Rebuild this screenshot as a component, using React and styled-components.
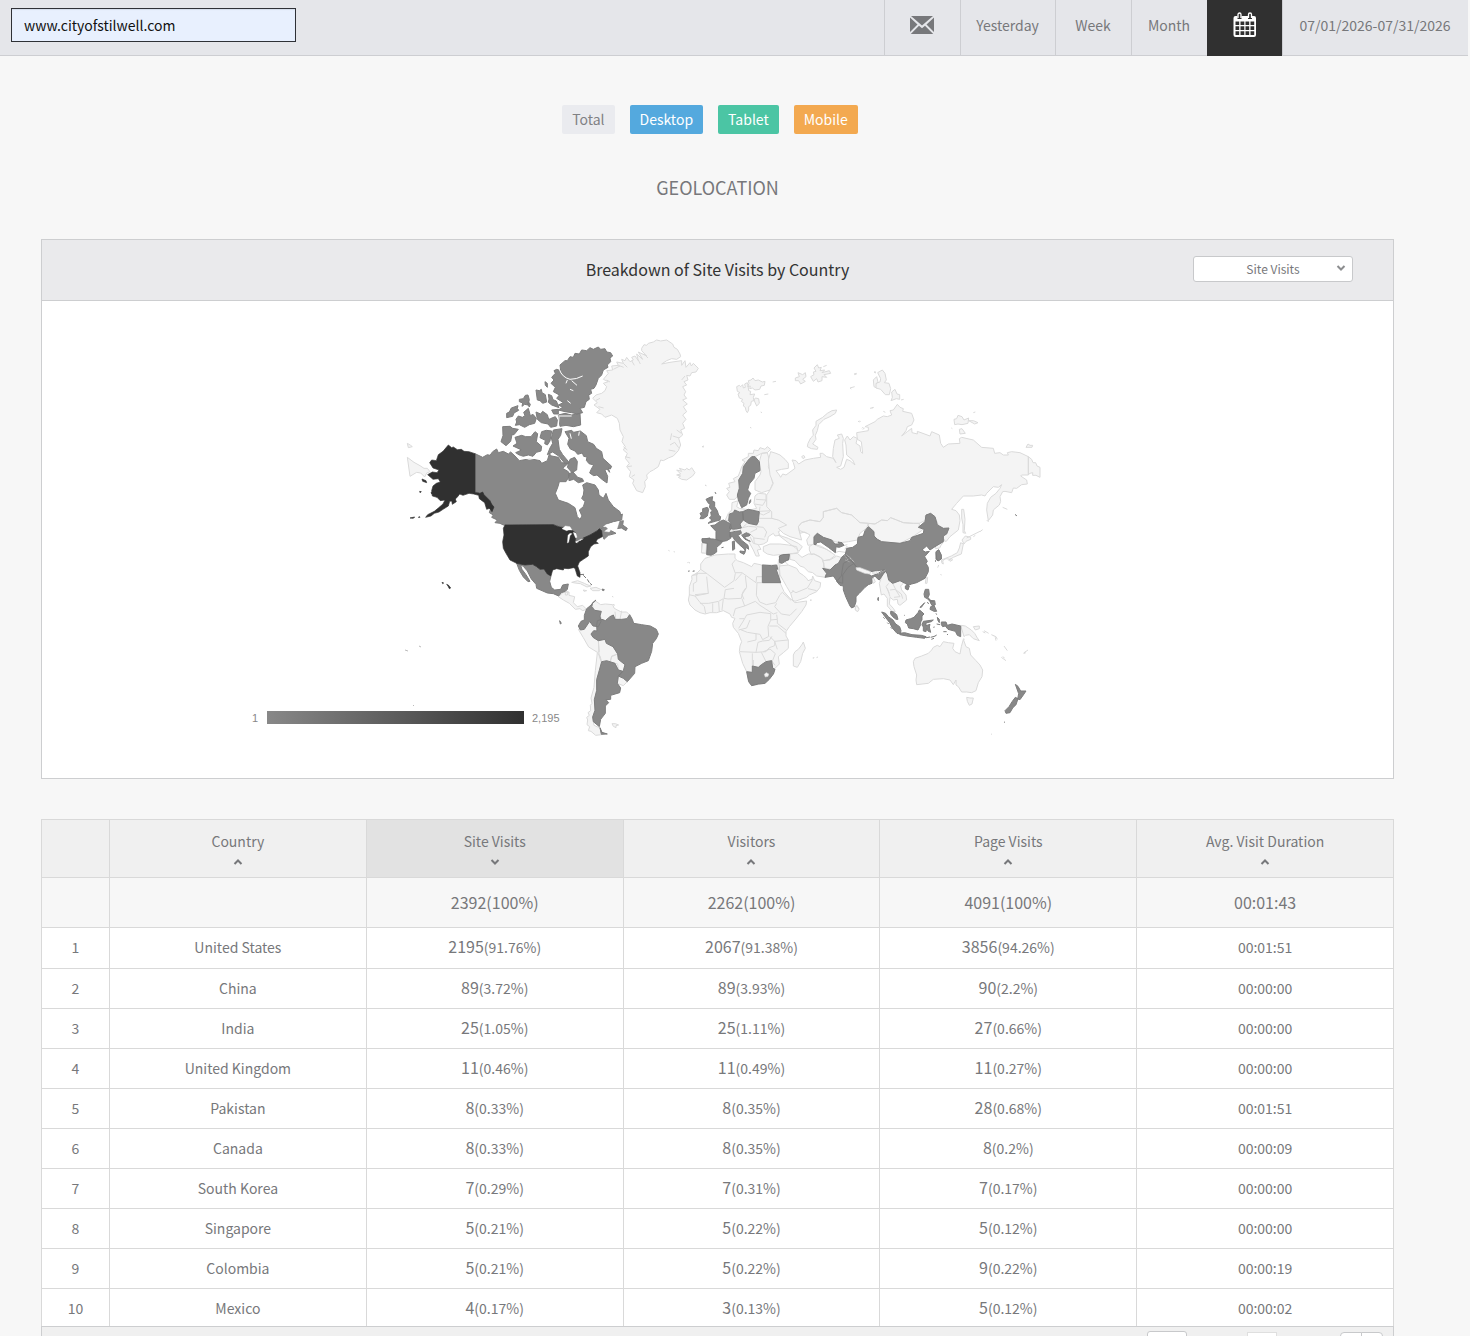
import React, { useState } from 'react';
import styled, { createGlobalStyle, css } from 'styled-components';

const GlobalStyle = createGlobalStyle`
  * {
    box-sizing: border-box;
  }

  body {
    margin: 0;
    background: #f7f7f7;
    color: #77787b;
    font-family: 'Noto Sans CJK SC', 'Open Sans', sans-serif;
    font-size: 14px;
  }

  button,
  input,
  select {
    font-family: inherit;
    font-size: inherit;
    color: inherit;
  }
`;

const Page = styled.div`
  height: 100vh;
  overflow: hidden;
`;

const TopBar = styled.header`
  display: flex;
  align-items: stretch;
  justify-content: space-between;
  height: 56px;
  margin-right: 2px;
  background: #e5e6ea;
  border-bottom: 1px solid #cdced2;
`;

const SiteInput = styled.input`
  width: 285px;
  height: 34px;
  margin: 8px 0 0 11px;
  padding: 0 12px;
  border: 1px solid #2f3136;
  border-radius: 0;
  background: #e8f0fe;
  box-shadow: inset 0 1px 1px rgba(0, 0, 0, 0.08);
  color: #111111;
  outline: none;
`;

const Periods = styled.nav`
  display: flex;
  height: 56px;
`;

const PeriodButton = styled.button`
  display: flex;
  align-items: center;
  justify-content: center;
  width: ${({ $width }) => $width || 76}px;
  padding: 0 1px 6px 0;
  border: 0;
  border-left: 1px solid #cdced2;
  border-bottom: 1px solid #cdced2;
  background: transparent;
  cursor: pointer;

  ${({ $active }) =>
    $active &&
    css`
      border-color: #303030;
      background: #303030;
      color: #ffffff;
    `}
`;

const Content = styled.main`
  padding: 49px 76px 0 41px;
`;

const Devices = styled.div`
  display: flex;
  justify-content: center;

  button {
    margin-right: 15px;
  }
`;

const DeviceButton = styled.button`
  height: 29px;
  padding: 0 10px;
  border: 0;
  border-radius: 2px;
  background: ${({ $background }) => $background};
  color: ${({ $color }) => $color || '#ffffff'};
  line-height: 29px;
  cursor: pointer;
`;

const Title = styled.h1`
  margin: 39px 0 37px;
  font-size: 18px;
  font-weight: 400;
  line-height: 29px;
  text-align: center;
`;

const Panel = styled.section`
  border: 1px solid #cdced0;
  background: #ffffff;
`;

const PanelHeader = styled.div`
  display: grid;
  grid-template-columns: 200px 1fr 200px;
  align-items: center;
  height: 61px;
  border-bottom: 1px solid #cdced0;
  background: #eaeaec;
`;

const PanelTitle = styled.h2`
  grid-column: 2;
  margin: 0;
  padding-bottom: 2px;
  color: #333333;
  font-size: 16px;
  font-weight: 400;
  text-align: center;
`;

const MetricPicker = styled.div`
  position: relative;
  width: 160px;
  height: 28px;

  svg {
    position: absolute;
    top: 8px;
    right: 7px;
    pointer-events: none;
  }
`;

const MetricSelect = styled.select`
  display: block;
  width: 160px;
  height: 26px;
  padding: 0 8px 2px;
  border: 1px solid #c8c9cb;
  border-radius: 3px;
  background: #ffffff;
  appearance: none;
  font-size: 12px;
  text-align-last: center;
`;

const MapSvg = styled.svg`
  display: block;
  width: 100%;
  height: 477px;
`;

const Scroller = styled.div`
  max-height: 507px;
  margin-top: 40px;
  overflow: hidden;
`;

const Table = styled.table`
  width: 100%;
  border-collapse: collapse;
  table-layout: fixed;
  background: #ffffff;
  text-align: center;

  th,
  td {
    padding: 0 0 2px;
    border: 1px solid #d9d9d9;
    font-weight: 400;
    line-height: 20px;
  }
`;

const IndexCol = styled.col`
  width: 68px;
`;

const HeadCell = styled.th`
  height: 58px;
  background: ${({ $sorted }) => ($sorted ? '#e2e2e2' : '#f0f0f0')};
`;

const SortButton = styled.button`
  display: flex;
  flex-direction: column;
  align-items: center;
  gap: 7px;
  width: 100%;
  padding: 2px 0 0;
  border: 0;
  background: none;
  line-height: 20px;
  cursor: pointer;
`;

const TotalRow = styled.tr`
  height: 50px;
  background: #f7f7f7;
  font-size: 16px;
`;

const Row = styled.tr`
  height: 40px;

  :nth-child(2)& {
    height: 41px;
  }
`;

const Count = styled.span`
  font-size: 16px;
  line-height: 16px;
`;

const Footer = styled.footer`
  display: flex;
  justify-content: flex-end;
  gap: 60px;
  height: 50px;
  padding: 4px 10px 0;
  border: 1px solid #cdced0;
  background: #f0f0f0;
`;

const PageSize = styled.select`
  width: 40px;
  height: 28px;
  border: 1px solid #c8c9cb;
  border-radius: 3px;
  background: #ffffff;
  appearance: none;
  text-align-last: center;
`;

const PageNumber = styled.input`
  width: 30px;
  height: 24px;
  margin: 1px 4px 0 0;
  border: 1px solid #dfdfdf;
  background: #ffffff;
  text-align: center;
`;

const Pager = styled.div`
  display: flex;
  height: 28px;
  margin-top: 1px;
`;

const PagerButton = styled.button`
  width: 22px;
  margin-left: -1px;
  border: 1px solid #c8c9cb;
  border-radius: ${({ $side }) => ($side === 'left' ? '4px 0 0 4px' : '0 4px 4px 0')};
  background: #ffffff;
`;

const Caret = ({ up, color = '#77787b' }) => (
  <svg width="10" height="8" viewBox="0 0 10 8" aria-hidden="true">
    <path
      d={up ? 'M1.5 6 5 2.5 8.5 6' : 'M1.5 2 5 5.5 8.5 2'}
      fill="none"
      stroke={color}
      strokeWidth="2"
    />
  </svg>
);

const MailIcon = () => (
  <svg width="24" height="18" viewBox="0 0 24 18" aria-hidden="true">
    <path
      fill="#77787b"
      d="M1 0h22L12 9.400zM0 1.500 7.500 8.500 0 16zM24 1.500 16.500 8.500 24 16zM9 9.800l3 2.500 3-2.500 8.200 8.200H.8z"
    />
  </svg>
);

const CalendarIcon = () => (
  <svg width="24" height="26" viewBox="0 0 24 26" aria-hidden="true">
    <path
      fill="#ffffff"
      fillRule="evenodd"
      d="M2 4h2.500v3h4V4h6.500v3h4V4H21a2 2 0 0 1 2 2v17a2 2 0 0 1-2 2H2.500a2 2 0 0 1-2-2V6a2 2 0 0 1 2-2zM2.500 9.500V13h3.700V9.500zm5 0V13h3.800V9.500zm5 0V13h3.700V9.500zm5 0V13h3.700V9.500zM2.500 14.300v3.600h3.700v-3.600zm5 0v3.600h3.800v-3.600zm5 0v3.600h3.700v-3.600zm5 0v3.600h3.700v-3.600zM2.500 19.200v3.900h3.700v-3.900zm5 0v3.900h3.800v-3.900zm5 0v3.900h3.700v-3.900zm5 0v3.900h3.700v-3.900z"
    />
    <path
      d="M5 6V2.500a1.500 1.500 0 0 1 3 0V6M15.500 6V2.500a1.500 1.500 0 0 1 3 0V6"
      fill="none"
      stroke="#ffffff"
      strokeWidth="1.300"
    />
  </svg>
);

// Each region is drawn on its own grid, three units to a pixel.
const regions = [
  {
    name: 'north-america',
    origin: [490, 330],
    none: [
      'M455 55 462 44 470 46 475 40 490 36 500 30 512 33 530 30 548 42 552 52 562 58 570 72 572 80 560 88 545 86 530 92 515 102 540 97 575 92 575 106 585 92 588 112 600 98 604 108 610 100 625 115 618 126 605 128 600 138 590 136 594 150 582 155 590 165 578 170 587 185 582 195 590 205 578 210 592 222 580 230 590 245 578 255 588 268 578 280 584 295 572 300 578 315 566 325 572 345 565 362 550 378 535 384 520 392 512 390 505 410 490 420 480 425 470 435 472 445 464 455 466 470 458 488 440 482 428 460 432 450 418 440 422 425 410 410 418 400 406 385 412 370 400 360 406 350 396 335 400 320 390 300 388 280 382 265 365 255 345 262 335 252 320 248 330 238 312 225 322 218 308 205 318 195 335 190 345 182 350 170 340 160 355 155 340 148 355 130 350 122 368 120 365 108 385 106 380 96 400 100 395 88 405 92 410 82 420 95 430 90 425 82 435 78 445 92 440 72 458 88 445 66 470 78 455 62z',
      'M560 435 572 432 560 420 575 424 568 415 585 420 590 415 598 420 605 413 615 428 608 438 590 450 575 448 565 442 572 438z',
      'M636 350l6-2M646 465l3 2',
      'M-248 340l10 6 5 4-12 3zM-248 382l20 15 18 10 12 8 10 0 8 10-10 4-6 12-12-12-12-2-20 12z',
    ],
    some: [
      'M-45 371-22 382-8 374 0 376 8 365 20 357 25 368 40 364 55 372 62 366 75 378 88 392 110 388 130 388 150 392 155 400 172 392 178 372 185 378 205 382 215 398 235 400 218 415 235 425 240 435 228 455 208 455 204 470 196 490 205 510 235 520 255 533 262 560 270 568 276 558 268 540 280 530 285 515 275 505 280 495 282 480 278 465 290 458 315 465 325 480 327 495 340 505 348 490 355 510 370 530 390 545 392 555 397 552 395 570 370 575 350 582 330 598 345 590 362 588 358 598 365 603 378 610 355 616 342 628 336 612 328 598 300 615 262 638 255 620 248 600 225 592 195 585 40 585 30 580 15 578 22 570 5 562 10 555-2 548 2 535-8 530-5 520-15 505-25 490-45 485z',
      'M388 575 400 572 398 585 412 595 408 602 394 594 380 596z',
      'M210 105 225 92 232 92 240 80 250 82 255 70 268 72 275 60 290 62 300 53 310 58 325 51 332 58 345 56 350 66 362 68 368 78 360 84 362 95 352 105 354 112 340 120 335 135 325 145 318 165 312 175 302 178 305 190 296 195 298 208 288 215 283 232 270 235 278 248 262 252 245 248 225 245 205 240 218 232 205 225 220 218 200 205 208 195 190 185 196 172 183 160 192 150 185 142 196 130 192 122 200 118 212 122z',
      'M205 255 225 250 245 255 270 250 272 285 250 290 228 286 210 289z',
      'M138 180l10 2 6-4 2 10 10 6 4 22-12 4-8-8-8-2zM175 193l10 4 4 12 10 4 8 20-22-8-10-8 2-10zM88 208l12-2 6-10 8-1 4 14-4 16-10-2-8 6 2-10-10-4zM50 250l8-4 6-12 20-7-2 8 4 6-14 8-4 10-18 4zM165 155l7 5 0 12-6-6zM185 240l20-2 0 14-14 0z',
      'M78 268l7-10 12 4 8-5-4-10 14-12 6 22 8-4 10 12-5 15-16 4-14 8-16-8-12 2 4-10zM138 246l14 6 6-8 14 10 4 14 20-8 6 10-2 18-18 4-8-10-20-4-12-10zM115 215l6 8-3 8-5-8z',
      'M38 290l22-1 8 6 17 3-13 16-6 0-4 20-14 13-15-12 6-18zM75 322l20-6 12 4 16 0 12-15 8 6-4 24 16 14-2 14-14 4-10 12-14-4-20 5-18-12 18-8-26-12 12-8zM155 305l14-4 16 2-5 30-8 12-8-4 2-10-16-8zM190 300l26-4-4 20-8 12 4 30 10 16 20 24-12 4-20-24-18-12-16 8 8-20 8-14-4-16z',
      'M225 305l20-4 6 6 20-4 18 14 4 18 18 8 8 12 16 10 4 20 26 24-4 8-6-4 4 14-8-10-6 4 8 18-2 20-14-10-16-14-10 2-12-8 4-10 8-14-14-4-8-10 2-10-10-2-4-10-14 4-8-10-14-6-8-14 4-18zM240 388l14-6 8 12-2 26-14 8-14-16zM235 432l14-6 14 16 14 4 4 8-16 4-14-10-14 4zM268 452l6-6 4 6z',
    ],
    top: [
      'M-125 345l10 8 5-2 12 8 12-1 8 6 15 1 18 6v116l15 3 8-4 4 8 18 18 6 14-4 8-12 4-6-20-16-12-2-10-15-4-14-2-18 6-10-4-6 8-12 12-12 2-4 14-16 10-12 8-14 4-10 8-16 4 6-8 20-10 12-10 14-12 6-12-14 2-10-10-14-4-2-16 4-14 10-8 12-4-6-10-16 2-16-14 14-8 14 2 6-8-18-6-10-16 6-8 14 2 6-18 14-10zM-115 510l10-5 4 10-12 8zM-204 447l12 5 2 6-12-4zM-211 484l5 1-4 3zM-177 487l6 3-4 2zM-240 564l14-3-4 4zM-215 562l4-2 1 2zM-144 757l5 2-3 2zM-130 763l6 3 6 8-4 2-4-8z',
      'M-2 515l14 16-6 14-10-14z',
    ],
  },
  {
    name: 'south-america',
    origin: [490, 500],
    none: [
      'M305 310l13-6 14 10 14-2 22 2 4 10 6 4 16 8 16 0 8 8-6 12-16 4-20-2-6-13-10 5-14 12-11-4-5-14-18-14z',
      'M265 388l20-8 14-15 10 10 14 4-2 12-18 12 8 10 14 8 3 34-6 2-26-16-16-28z',
      'M325 422l20-4 6 12 20 10 12 22-18 6-5 18-25 4-8-24z',
      'M365 470l18-8 2 16 20 16-6 22-14-6-2-18-22-6z',
      'M385 528l14 5 13 12-12 12-18-7z',
      'M322 458l8 10 5 18-7 24-8 30 1 30-8 30 2 30-7 22 4 24 18 8 5 20-18 2-14-12-8-2 4-12-8-6 2-14-3-8 8-6-4-8 8-6-1-16 5-6-3-16 9-32 4-50z',
      'M205 290l14-12 18-2 0 10 17 4-4 18 12 12 16-4 12 12-12 4-8-6-14 2-18-18-18-10z',
      'M245 247l18-5 20 8 8 4 12 4-12 3-20-10-16-2zM300 265l18-3 14 6-4 4-20 0zM280 270l10 2-8 2zM366 289l4 2M366 671l10 0 10 4-8 2 0 6-8-4zM535 151l4 2M551 155l4 1M226 275l8 0-2 10-6 0zM369 313l6 3',
      'M635 130l15-2-1 30-14 1zM375 335l2 22M395 332l-5 26',
    ],
    some: [
      'M80 190l25 5 23-2 12 8 10 7 12-1 10 15 11 6-4 16 5 18 10 8 18-2 6-13 17-3-3 16-6 6-12 4-8 10-16-7-18-2-32-14-2-12-14-16-12-24-12-14-8-4zM80 190l12 6 4 12 12 16 12 20-6 1-14-14-12-20z',
      'M318 300l-10 8-3 12 9 11 20 3-4 14 3 16-8 16-16-2-10-14-16 24-12 2-6-12 8-14 10-4 0-14 7-20 10-8z',
      'M320 378l2-16 14-4 10 4 14-12 10-5 5 13 20 0 16-2 8-12 8 14 4 12 24 4 26 4 18 10 6 14-6 14-11 14-3 24-10 28-20 8-20 10-1 20-22 25-12-10-15-7 15-16 5-18-20-16-2-16-14-22-20-10-4-12-20 4-16-10-6-10 8-10 10 1z',
      'M335 485l15-3 25 8 10 20 14 4-14 14-3 22 10 14-3 14-27 8 0 12-14 1 8 9-10 10 0 22-14 18-4 22-18-15-2-14 7-20-2-32 7-28 0-32 8-28zM330 683l6 14 16 5-18 1zM337 267l6 2-2 3-5-2zM209 362l5 8-3 2zM636 118l24-4v50l-8-4 1-32-16-2z',
    ],
    top: [
      'M45 75 190 74 200 78 215 82 228 82 248 92 258 100 256 128 262 130 280 114 300 105 322 92 328 86 335 92 337 110 322 118 318 125 325 130 312 132 302 140 295 155 295 168 280 178 268 186 263 198 270 218 270 232 262 228 255 205 250 203 235 206 222 205 220 210 200 206 188 210 183 228 172 222 162 207 150 208 140 200 128 193 105 195 80 190 60 180 48 160 40 145 38 125 42 105 40 85z',
      'M270 224l12-1M280 226l8 8M292 238l6 10M300 250l6 5M597 187l1 1M597 213l2 0M611 213l3 0',
    ],
    water: [
      'M216 86l10-8 14 2 6 10-10 0-6 2zM234 106l6-6 6 1-6 6-4 20-4 2zM250 97l8 3 3 12-4 2-4-8zM257 125l12-4-10 7zM268 120l12-4-10 6zM340 80l8-6 20-4 20-6-4 14-4 12-8 0 2-10-10 6-6 10-14-2 10-8-6-6z',
    ],
  },
  {
    name: 'europe',
    origin: [680, 360],
    none: [
      'M140 385 150 382 146 370 165 365 160 356 175 348 180 335 185 320 195 305 186 300 205 290 205 280 220 280 222 270 235 272 240 263 255 268 262 260 272 268 262 278 245 280 225 290 210 300 200 320 185 350 178 380 175 405 165 418 148 418 140 405 148 395z',
      'M245 280 262 278 268 300 265 320 272 340 278 370 270 390 245 398 225 390 225 365 240 345 243 335 238 305z',
      'M225 408 235 400 258 402 258 420 272 424 280 440 278 475 295 480 320 490 315 505 295 515 300 526 285 528 280 520 265 530 262 545 250 552 235 555 243 568 232 570 238 588 228 588 220 570 210 552 200 535 185 525 180 505 165 510 150 515 135 482 145 460 155 450 156 428 175 422 170 440 178 445 210 450 230 445 222 430z',
      'M250 560 270 552 300 552 325 555 350 560 355 578 325 582 300 584 280 586 262 582 250 574z',
      'M295 525l30 10 30 15 12 10-10 14-12-12-18-12z',
      'M68 545l12 5-2 30-14-2z',
      'M170 80l8-4 4 4 6-6 2 10 6-2-2-10 8-4 2 8 2 16 6 2-2 10 14-2-4 10 2 10-8 2-2 12-6 4 0 10-4 8-4-6-2-10-6-4 2-8-8-6 4-6-10-4-4-12 6-4-8-4zM205 62l8-2 6-6 6 8 10-2 12 6 8-2-2 12-10 2-4 10-14 2-8-6-8 2 2-8-8 2 4-10zM222 120l4-6 10 2 2 14-8 8zM253 104l12-2M278 66l10-2M242 156l4 2M210 202l4 2',
      'M346 54l12-4-4-12 14 6 8-6 2 12-10 8 8 6-14 8-6-10-10 0zM392 50l10-6-2-8 8-2-6-10 10-10 4 10 8-2-4 10 14-2-8 8 22-6 4 8-20 4 8 8-14-2 0 12-12 4-4-10-10 8zM430 20l10-4M510 84l14-4M522 42l8-2M582 36l6 3M534 185l5-2M546 205l4-4',
      'M384 250l8-16 8-8-2-16 10-14 0-12 20-12 14-12 14-8 14-2-4 10-16 10-18 8-16 16-4 18-6 14 2 12-10 14 16 10-2 6-18-2-12-6z',
      'M580 60l10-10 4 16-4 18-8-4zM570 145l10-2M365 290l6-4 4 6-6 4zM68 262l4-2M75 376l4 1',
    ],
    lines: [
      'M228 418l30 2M224 432l24 4 10-16M240 440l-2 14 40-2M238 475l40 0M205 490l25 5 8-12M180 505l25-6 22 2 4 6-20 10M230 500l20 2 10 14-6 16M205 518l16 14 2 18M222 534l32 4M210 530l10 20 16 4M190 500l10-8M135 482l16-2M270 455l-20 10-12-5',
    ],
    some: [
      'M215 290 225 290 238 305 240 332 225 340 222 355 208 372 203 390 212 400 205 415 200 435 185 443 175 420 172 405 178 385 176 360 188 340 190 320 205 300z',
      'M208 425l4-6 0 6-4 6z',
      'M148 462 160 458 164 450 178 456 188 455 190 480 180 492 184 504 160 508 148 505 152 490 146 482z',
      'M188 455 205 448 238 455 235 485 230 495 205 490 190 480z',
      'M92 497 105 495 118 485 130 480 152 492 154 504 148 514 152 535 140 542 124 545 108 538 108 514z',
      'M66 536 100 537 128 543 124 550 110 562 110 576 95 586 80 584 82 550 68 548z',
      'M150 518 166 514 182 512 184 520 174 526 184 540 204 556 206 568 198 562 196 574 192 566 178 554 164 540 158 530 150 532z',
      'M180 573l16 2-4 8-12-6zM157 545l6-2 1 24-6 4zM125 563l5-1zM185 526l14-8 12 6-4 4-14 2 6 8 12 6-16-6-8-10z',
      'M84 428 78 418 90 412 98 410 96 422 104 426 104 440 112 452 116 466 122 470 120 480 106 484 84 490 96 480 88 474 94 468 92 456 98 454 88 442 90 434z',
      'M60 460l8-4 0-10 14-4 4 6-4 20-12 8-10 0 4-8zM105 396l3 6M300 588l28-5-2 17-26 2z',
    ],
  },
  {
    name: 'africa',
    origin: [680, 540],
    none: [
      'M75 55 85 52 105 45 145 42 165 42 165 55 172 62 190 68 215 80 222 70 245 75 290 75 298 95 300 128 312 155 330 175 345 188 380 183 378 195 365 215 345 240 328 260 318 275 318 288 325 300 325 325 310 338 295 350 298 372 285 385 282 400 255 430 215 437 206 425 200 395 188 370 178 335 180 318 185 305 175 280 160 262 158 250 165 235 155 232 150 222 130 212 110 218 90 218 75 222 60 218 45 210 30 195 25 180 28 165 28 140 36 118 35 108 52 98 62 88 62 72z',
      'M298 78 325 75 350 85 358 98 370 106 380 115 384 122 396 118 398 108 404 122 422 128 420 142 410 155 388 165 380 172 345 184 338 180 332 160 320 140 310 122 300 105z',
      'M330 42 352 40 366 52 385 42 404 42 425 55 432 70 430 85 440 100 436 112 410 108 398 98 385 95 372 82 360 78 345 62 330 58z',
      'M388 20 400 12 416 20 440 28 466 46 450 58 432 62 420 50 400 42 394 44 388 30z',
      'M428 62 450 60 470 48 482 52 500 48 505 54 485 60 478 75 462 90 434 84z',
      'M296 58l4 14-2 18-5-10 2-14zM340 345 345 335 355 328 365 315 370 306 376 325 368 340 362 365 352 382 340 378zM400 355l3-2M410 352l3-1M390 181l5-1M22 68l4-1M526 200l5-4 6 10-4 8-7-4z',
    ],
    lines: [
      'M52 98l0 6-17 2M62 88l20 14 52 40M80 100l-30 0 0 25-10 6 0 24M80 110l5 50 -40 4M134 142l28-20 4-22-10-28 10-12M166 98l20 0 42 30 2-18 16 0M186 100l-20 22M196 108l4 34-14 22 6 14M247 128l-16 0-2 38 10 20M162 145l-26 4-4 26 12 2 40-2 4-18 10-14M85 160l-40 8-18-4M45 168l14 18 14 14 4 20M98 190l0 26M116 186l2 30M130 176l-4 34M86 190l30-6 14-8M60 190l26 0M186 176l8 22-28 8-6 22M194 198l32-14 14 12 40 26 12-4M239 186l20 8 28-6 12-22M299 165l8-8 26 24M290 190l-6 10 20 22 26 4 20-20M200 225l40-8 32 4 0 20-8 18 2 30 -18 10-8-16-38-6-20-8M200 225l-10 18-14 22M178 236l14 0M272 240l20-2-2-14M292 238l0 12 26 20M268 258l24 0 26 22M270 290l14 14 40-4M180 335l48 2 6-30 14-4 20-2 8-12M228 280l0 20-26 6M228 337l30-2 10-12 16-6 0-14M284 304l8 24M217 395l0-55M220 360l0 18M258 365l-14-28M250 335l20-8 16 14-8 20-20 4M275 362l10 14M210 240l-10 24-24 6M325 75l-14-14M398 118l-16 26-34 14-12-6M410 152l-26-6M332 160l10-8',
    ],
    some: [
      'M247 75 275 77 290 75 293 88 288 86 302 128 247 128z',
      'M298 48 308 44 328 43 326 58 306 70 299 68z',
      'M200 395 217 397 217 378 235 382 244 374 258 365 275 362 278 384 285 388 280 402 268 418 255 430 235 432 215 437 206 425z',
      'M24 93l3 1M38 94l4-1',
    ],
    hole: ['M253 403l6-5 7 4-2 7-8 2z'],
  },
  {
    name: 'russia',
    origin: [800, 360],
    none: [
      'M-88 275-72 280-60 285-45 298-35 310-35 325-55 328-72 332-62 345-58 352-52 342-42 345-15 325-20 308-24 300-12 302-4 312 15 300 40 295 62 292 60 280 68 280 80 290 100 295 108 308 98 290 100 265 105 240 118 235 112 225 125 222 130 235 128 250 130 290 122 318 110 322 122 328 132 322 140 298 150 302 165 315 158 300 140 285 138 255 134 240 142 228 150 240 160 230 172 235 168 250 180 258 182 275 188 280 184 245 172 238 170 218 205 212 205 202 195 200 225 185 232 178 250 168 262 170 275 165 270 152 280 150 292 133 300 142 310 146 308 154 335 160 342 180 335 195 322 200 318 212 305 228 322 215 335 205 336 218 352 222 352 214 390 228 395 215 418 225 422 250 430 262 445 252 480 250 478 236 485 232 520 240 545 262 580 265 584 280 600 278 610 285 625 285 622 278 635 275 660 278 685 290 685 345 665 345 662 348 680 360 682 372 665 374 650 385 640 384 635 398 615 394 608 395 600 410 602 424 598 435 580 450 578 465 565 482 560 450 562 430 572 412 588 400 600 385 605 374 595 382 580 380 560 400 555 408 545 405 520 408 490 408 470 430 455 448 468 452 478 465 480 482 475 510 450 530 438 545 428 536 430 530 445 510 430 505 415 495 405 470 392 462 375 468 378 480 358 490 340 490 310 488 290 480 272 473 262 482 245 480 225 492 205 490 180 488 155 465 125 458 110 445 70 455 70 472 60 485 30 480 5 488-5 500-2 515 5 540-30 530-50 520-65 505-40 495-65 480-85 475-85 455-100 440-100 405-90 390-80 370-90 345-95 300z',
      'M685 290l10 8 4 10 8 0 4 10 9 4v30l-12-6-10 0 0-8-8 2-5 4zM678 262l6-10 6 4 8 0-2 6zM608 442l14 6M560 480l6 6M540 515l8-6',
      'M-5 500 5 488 30 480 60 485 70 472 70 455 110 445 125 458 155 465 180 488 205 490 200 504 180 520 172 540 145 545 120 548 105 545 95 540 70 532 52 520 42 530 42 553 24 556 20 540 30 525 14 516 0 520z',
      'M262 482 272 473 290 480 310 488 340 490 358 490 358 500 370 505 365 512 335 532 300 550 245 545 225 532 220 512 205 498 205 490 225 492 245 480z',
      'M485 448l6 0 4 30-2 34 4 8-8-2 0-24-4-20zM486 540l10-12 16 4 0 6-14 6-6 8zM490 552l-6 30-10 4-14 6-10 6-12-2-10 6 2 10-4-2-2-10 30-12 18-10 6-14 4-16zM446 600l8-4 4 4-8 4zM520 530l6-4M500 534l40-20M416 615l-3 8',
      'M405 552l22-16 8 4-12 16-4 8-12 2z',
      'M233 38l14-8 8 10 4 20-6 8 14 2 5 16-4 18-12 0-14-16-14-4 0-14 12-4 2-10zM222 36l6 0M228 72l6-6M275 96l10-8 6 14 8 2 0 14-10-2-16 6 4-10zM303 120l8-2M250 154l6 3M215 144l6-2M178 186l4-2M188 208l6-4M163 44l7-2M150 84l4 3',
      'M462 178l8-2 4-10 12 4 6 10 14-6-2 16-18 4-12-2-10 2zM506 182l14 0 14 6-10 4zM478 208l8-2 10 14-16 2zM520 158l6-2M454 204l3 2',
    ],
    some: [
      'M42 530 52 520 70 532 95 540 105 552 118 552 114 546 126 548 132 556 118 562 108 560 106 578 85 562 62 546 50 548 48 554 42 553z',
      'M408 578l8-8 6 14 2 12-10 6-6-4zM405 603l3 1M646 464l4 3',
    ],
    lines: ['M105 578l12-4 24 4M142 558l-8 10M110 562l32-8M42 553l22 6 30 18M0 512l20 8'],
  },
  {
    name: 'asia-pacific',
    origin: [800, 500],
    none: [
      'M238 250 244 235 250 215 262 220 266 240 278 250 300 242 312 248 302 258 305 270 318 285 320 300 300 316 294 312 292 298 280 300 270 292 268 312 280 325 286 335 276 334 262 318 262 295 252 282 244 285z',
      'M482 376l14 2 18 12 10 10 8 14 6 8-18-6-12-12-12 2-4 4zM520 380l18-2 0 8-12 4zM552 392l14 8M574 404l14 6 4 8M586 412l2 10M612 438l10 14M604 472l14 10M670 460l14-10M674 462l2-8M548 395l8 4M608 470l6 4M376 250l2-16 5-2-2 18zM166 320l5-2 6 10-4 7-7-5zM214 234l8 2 4 10-6 4z',
      'M340 485 345 475 365 468 385 460 395 450 400 442 412 436 420 440 430 425 445 428 462 430 458 445 465 455 480 462 484 440 490 418 498 440 508 445 512 465 528 482 540 495 548 510 546 530 535 548 528 572 515 578 500 576 485 576 475 560 468 555 468 540 460 554 450 540 430 536 400 538 385 550 350 554 348 540 350 525 342 500z',
      'M500 592l10 2 10 0-4 18-8 4-6-12zM422 222l2 4M38 474l4-1M50 473l3-1M573 702l3 1M30 300l4 1M490 416l4 2',
    ],
    some: [
      'M68 205 90 210 105 195 115 190 125 172 134 164 150 178 162 190 144 202 128 225 128 250 112 245 100 228 75 232 80 220z',
      'M130 190 150 180 162 190 172 205 190 214 215 228 235 220 250 210 258 212 250 222 238 240 232 236 225 228 215 235 216 250 205 254 195 262 178 280 168 290 168 305 163 320 155 324 150 318 138 292 130 270 130 258 120 256 110 244 124 228z',
      'M140 145 158 142 172 132 174 112 190 108 195 92 205 80 222 95 222 108 232 118 245 125 300 130 330 122 335 112 370 100 372 88 355 82 375 65 378 45 392 40 405 50 412 75 430 85 447 84 440 102 430 108 430 125 405 140 390 150 380 138 366 150 376 156 388 154 374 170 382 184 378 190 385 202 385 215 375 235 350 248 335 252 325 256 315 250 300 242 278 250 272 246 266 240 262 222 255 210 232 212 210 215 190 208 172 204 160 190 150 175 135 168z',
      'M316 258l6-4 6 4-4 12-8-4z',
      'M408 155l8-6 8 16 0 12-10 6-4-8zM405 182l3 1M646 44l4 3M233 298l2-6 0 10z',
      'M245 336l12 4 8 10 14 10 8 12 12 8 4 12-2 10-10-2-14-16-8-16-14-18zM272 334l8 2 10 8 4 14-6 0-10-8-6-8zM298 400l16-2 22 6 28 2 14 4-4 5-24-3-30-4-20-4zM372 410l8 3 10-2M392 412l12-3 6-4M402 415l-8 3M318 360l14-4 10-4 12-14 4-8 6 4 8 8-6 6 0 12-4 6 0 8-8 16-14-4-14-2-4-12-6-4zM370 364l14-2 16-2-6 5-16 4 0 8 12-4-2 8 4 16-8-4-4-8-2 10-8-2 0-12-4-6z',
      'M376 268l10 0 2 16-4 8 6 8 10 4-8 2-10-10-8-4-2-10zM392 320l10-4 8 18-8 0-12-6zM390 302l14 0 2 12-8 4-6-8zM360 322l14-14-10 14zM382 306l4 6M412 352l6 6 0 10-4-6zM410 372l10 2M424 366l14 0 4 10 14-4 26 6v32l-10-4-6-12-22-6-8-10-8 2-4-6zM400 382l4-1M430 395l10 0M444 402l-3 3M408 340l2 4M312 346l2 0M250 352l4 4M262 368l4 4M272 382l4 4',
      'M646 553l8 6 8 14 16 0-8 12-10 14-7-2 3-16zM646 592l8 4-6 18-10 10-8 14-12 2-3-8 12-12 10-16z',
      'M612 667l3-1',
    ],
    hole: ['M168 203l12 0 32 12-2 7-16-2-24-10zM216 218l14-4 2 6-14 1z'],
    lines: ['M266 250l-8 10 10 20M278 250l10 20 16 12 4 14M270 270l16-2 14 22-18 2M262 265l8 25'],
    hatch: 'M134 166l10 14M140 164l24 24M136 180l14 6M148 170l14 16M228 216l18-4M234 222l24-12',
  },
];

const columns = ['Country', 'Site Visits', 'Visitors', 'Page Visits', 'Avg. Visit Duration'];

const totals = ['', '2392(100%)', '2262(100%)', '4091(100%)', '00:01:43'];

const rows = [
  ['United States', [2195, '91.76%'], [2067, '91.38%'], [3856, '94.26%'], '00:01:51'],
  ['China', [89, '3.72%'], [89, '3.93%'], [90, '2.2%'], '00:00:00'],
  ['India', [25, '1.05%'], [25, '1.11%'], [27, '0.66%'], '00:00:00'],
  ['United Kingdom', [11, '0.46%'], [11, '0.49%'], [11, '0.27%'], '00:00:00'],
  ['Pakistan', [8, '0.33%'], [8, '0.35%'], [28, '0.68%'], '00:01:51'],
  ['Canada', [8, '0.33%'], [8, '0.35%'], [8, '0.2%'], '00:00:09'],
  ['South Korea', [7, '0.29%'], [7, '0.31%'], [7, '0.17%'], '00:00:00'],
  ['Singapore', [5, '0.21%'], [5, '0.22%'], [5, '0.12%'], '00:00:00'],
  ['Colombia', [5, '0.21%'], [5, '0.22%'], [9, '0.22%'], '00:00:19'],
  ['Mexico', [4, '0.17%'], [3, '0.13%'], [5, '0.12%'], '00:00:02'],
];

const join = (paths = []) => paths.join('');

const WorldMap = () => (
  <MapSvg viewBox="42 301 1351 477" role="img" aria-label="Site visits by country">
    <defs>
      <linearGradient id="scale">
        <stop offset="0" stopColor="#888888" />
        <stop offset="1" stopColor="#303030" />
      </linearGradient>
    </defs>
    {regions.map(({ name, origin, none, some, top, water, lines, hole, hatch }) => (
      <g
        key={name}
        transform={`translate(${origin[0]} ${origin[1]}) scale(0.33333)`}
        strokeWidth="3"
        strokeLinejoin="round"
      >
        <path d={join(none)} fill="#f4f4f4" stroke="#dadada" />
        <path d={join(lines)} fill="none" stroke="#dadada" />
        <path d={join(some)} fill="#888888" stroke="#7c7c7c" />
        <path d={join(top)} fill="#303030" stroke="#303030" strokeWidth="2" />
        <path d={join(water)} fill="#ffffff" stroke="#ffffff" strokeWidth="1" />
        <path d={join(hole)} fill="#f4f4f4" stroke="#dadada" strokeWidth="2" />
        <path d={hatch} fill="none" stroke="#d0d0d0" strokeWidth="2" strokeDasharray="4 3" />
      </g>
    ))}
    {/* fjords of Ellesmere Island, and the coast of Greenland */}
    <g transform="translate(490 330) scale(0.33333)" fill="none">
      <path
        d="M208 118Q216 142 240 148 260 148 278 138M245 152l16 14M232 150l-4 10M205 258l40 0M232 212l10 8M250 182l-10-4M88 378l30 10 30-6M240 310l4 16M268 305l-2 12M180 265l4-20M205 290l2-30"
        stroke="#ffffff"
        strokeWidth="3"
      />
      <path
        d="M370 118l20-10M385 106l16 6M400 100l12 12M425 92l8 14M445 90l6 12M462 72l12 12M400 350l12 10M405 380l16 4M412 410l14-2M425 440l10-6M560 300l14 10M548 318l20 6M540 345l14-8 12 16M536 360l20 4M575 150l10-12M330 205l-12 6M325 230l16 4M350 150l10 6M545 310l-4 20"
        stroke="#dadada"
        strokeWidth="3"
      />
    </g>
    <path d="M405 650l3 1M419 646l2 1M413 705l1 1" stroke="#bbbbbb" strokeWidth="1" />
    <rect x="267" y="711" width="257" height="13" fill="url(#scale)" />
    <g fill="#888888" fontFamily="'Liberation Sans', Arial, sans-serif" fontSize="11">
      <text x="252" y="722">1</text>
      <text x="532" y="722">2,195</text>
    </g>
  </MapSvg>
);

const Value = ({ value }) =>
  Array.isArray(value) ? (
    <>
      <Count>{value[0]}</Count>({value[1]})
    </>
  ) : (
    value
  );

const App = () => {
  const [site, setSite] = useState('www.cityofstilwell.com');

  return (
    <>
      <GlobalStyle />
      <Page>
        <TopBar>
          <SiteInput
            aria-label="Site"
            value={site}
            onChange={(e) => setSite(e.target.value)}
          />
          <Periods>
            <PeriodButton aria-label="Email report">
              <MailIcon />
            </PeriodButton>
            <PeriodButton $width={95}>Yesterday</PeriodButton>
            <PeriodButton>Week</PeriodButton>
            <PeriodButton>Month</PeriodButton>
            <PeriodButton $active $width={75} aria-label="Custom dates">
              <CalendarIcon />
            </PeriodButton>
            <PeriodButton $width={186}>07/01/2026-07/31/2026</PeriodButton>
          </Periods>
        </TopBar>
        <Content>
          <Devices>
            <DeviceButton $background="#eaebef" $color="#808184">
              Total
            </DeviceButton>
            <DeviceButton $background="#54a9de">Desktop</DeviceButton>
            <DeviceButton $background="#4bc5a4">Tablet</DeviceButton>
            <DeviceButton $background="#f3a950">Mobile</DeviceButton>
          </Devices>
          <Title>GEOLOCATION</Title>
          <Panel>
            <PanelHeader>
              <PanelTitle>Breakdown of Site Visits by Country</PanelTitle>
              <MetricPicker>
                <MetricSelect aria-label="Metric">
                  <option>Site Visits</option>
                  <option>Visitors</option>
                  <option>Page Visits</option>
                </MetricSelect>
                <Caret color="#8c8d8f" />
              </MetricPicker>
            </PanelHeader>
            <WorldMap />
          </Panel>
          <Scroller>
            <Table>
              <colgroup>
                <IndexCol />
                <col span="5" />
              </colgroup>
              <thead>
                <tr>
                  <HeadCell />
                  {columns.map((column) => (
                    <HeadCell key={column} $sorted={column === 'Site Visits'}>
                      <SortButton>
                        {column}
                        <Caret up={column !== 'Site Visits'} />
                      </SortButton>
                    </HeadCell>
                  ))}
                </tr>
              </thead>
              <tbody>
                <TotalRow>
                  <td />
                  {totals.map((total, i) => (
                    <td key={columns[i]}>{total}</td>
                  ))}
                </TotalRow>
                {rows.map((row, index) => (
                  <Row key={row[0]}>
                    <td>{index + 1}</td>
                    {row.map((value, i) => (
                      <td key={columns[i]}>
                        <Value value={value} />
                      </td>
                    ))}
                  </Row>
                ))}
              </tbody>
            </Table>
          </Scroller>
          <Footer>
            <PageSize aria-label="Rows per page">
              <option>10</option>
            </PageSize>
            <PageNumber aria-label="Page" defaultValue="1" />
            <Pager>
              <PagerButton $side="left" aria-label="Previous page" />
              <PagerButton $side="right" aria-label="Next page" />
            </Pager>
          </Footer>
        </Content>
      </Page>
    </>
  );
};

export default App;
